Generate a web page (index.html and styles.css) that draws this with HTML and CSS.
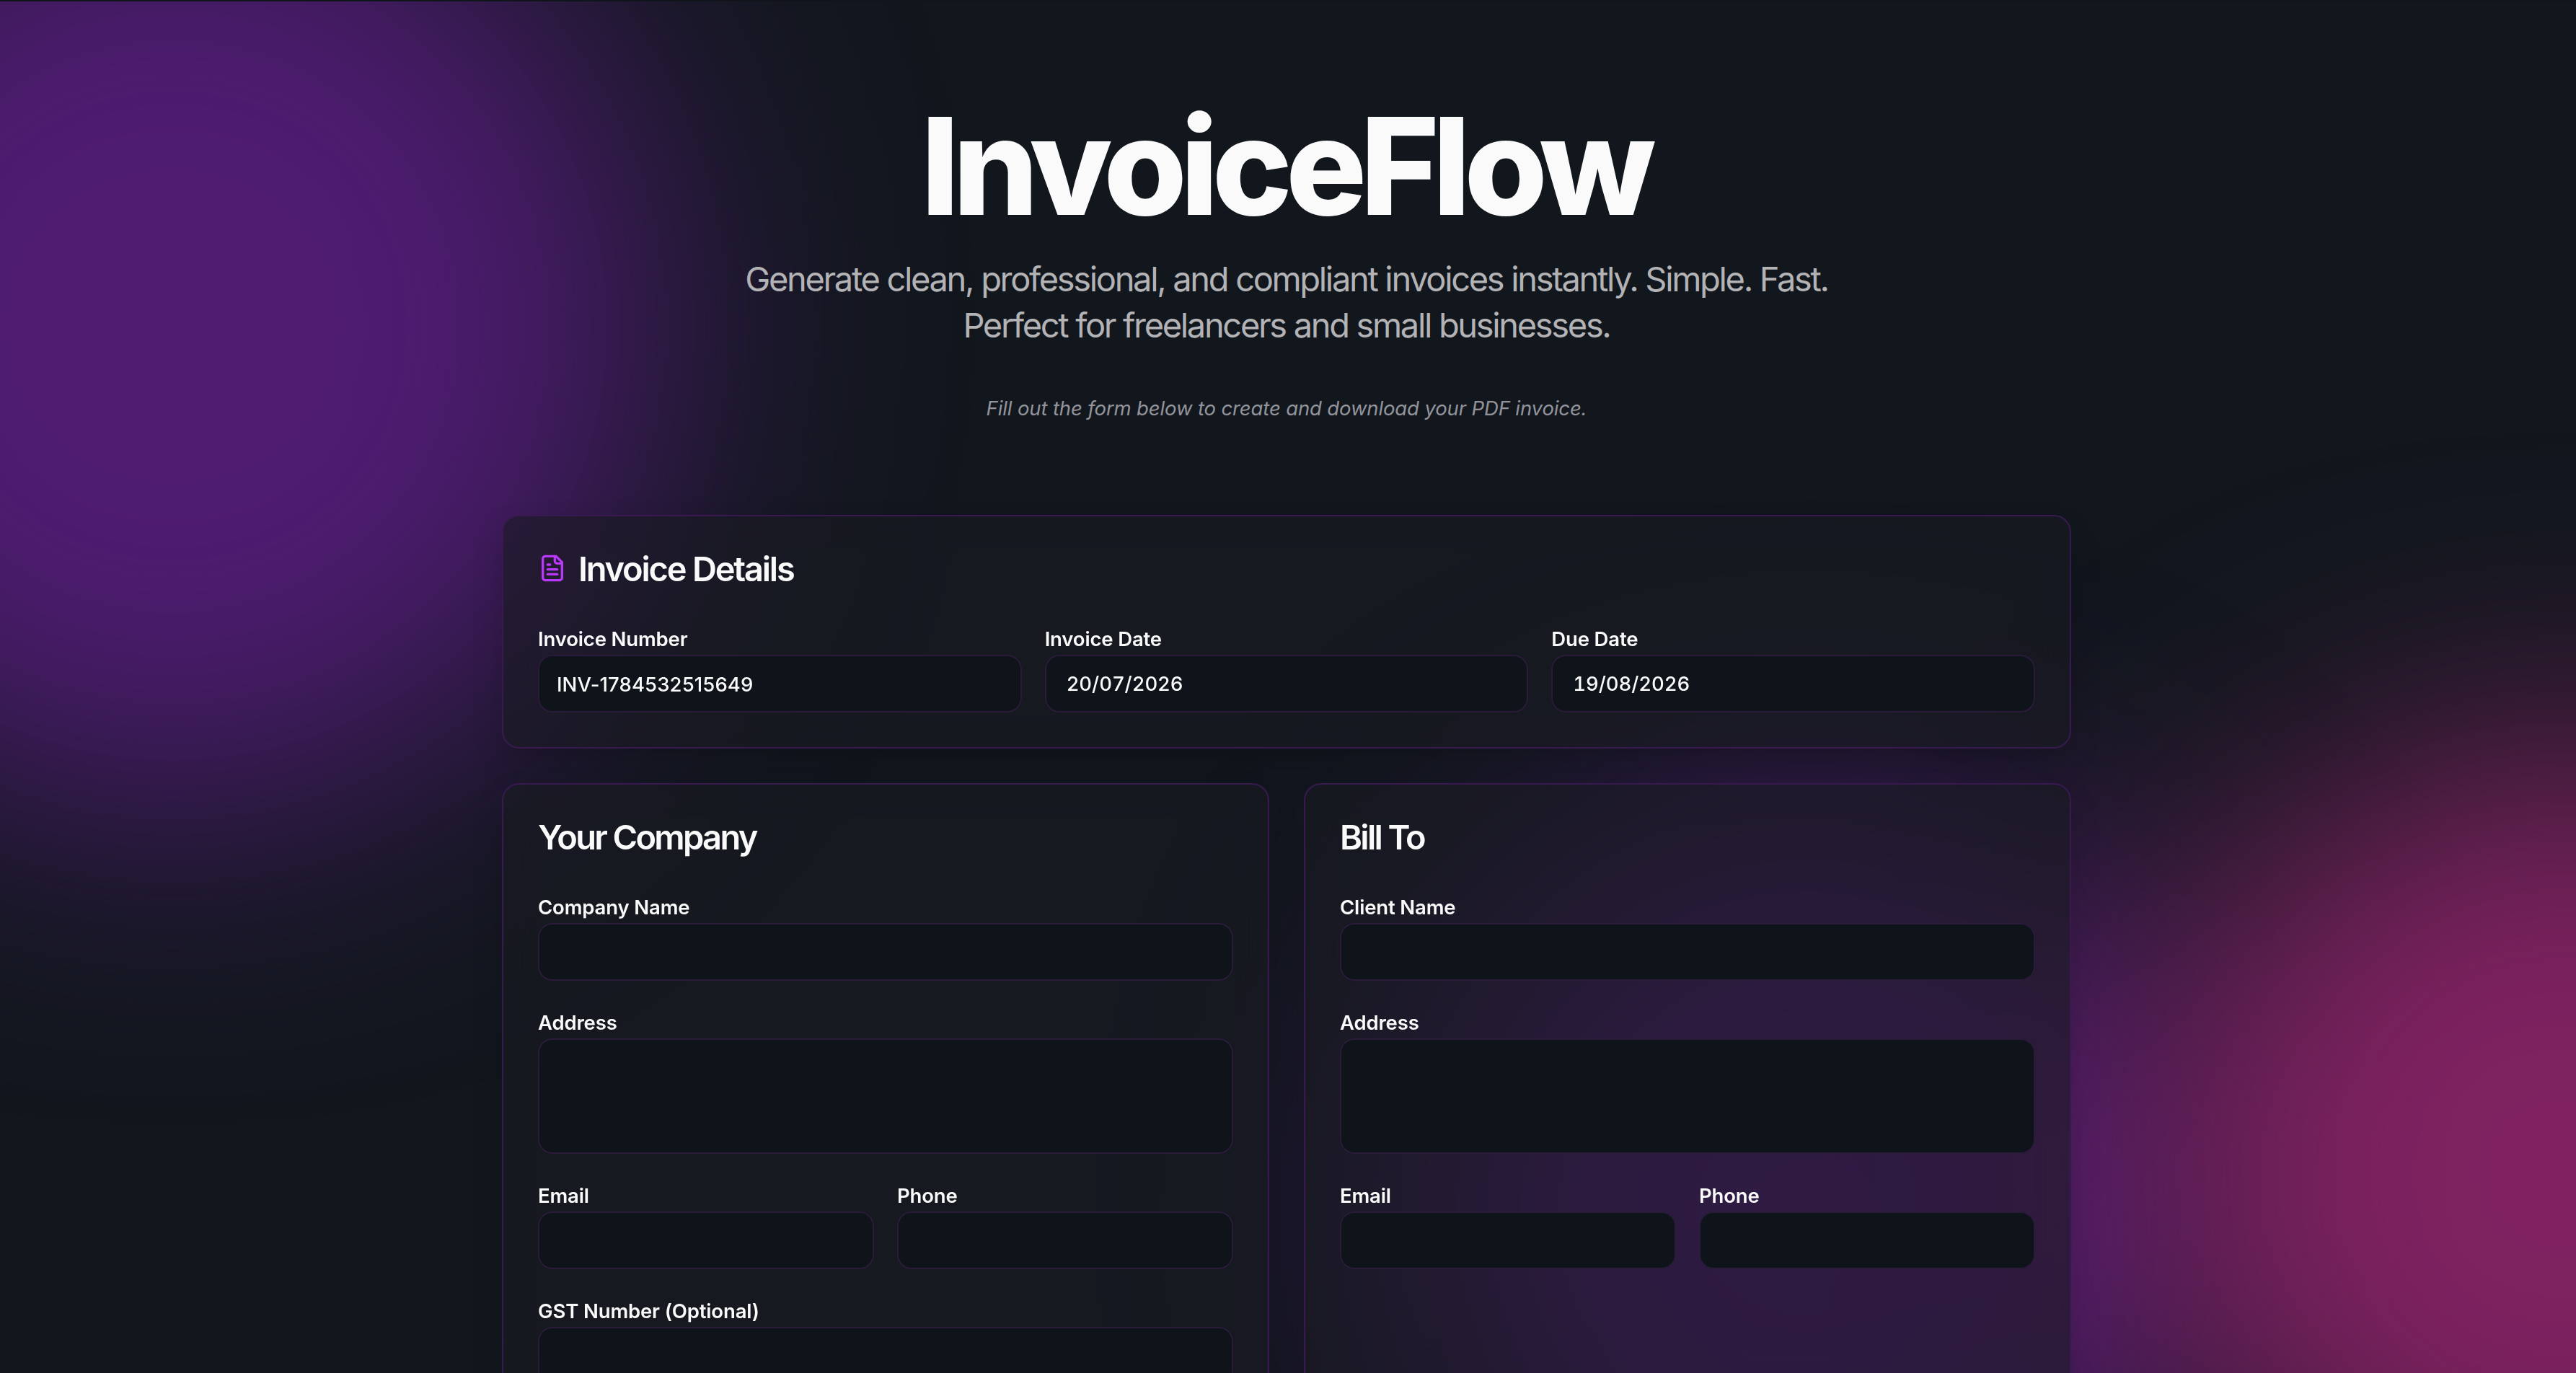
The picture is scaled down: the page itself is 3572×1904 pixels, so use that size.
FILE: index.html
```html
<!DOCTYPE html>
<html lang="en">
<head>
  <meta charset="UTF-8">
  <title>InvoiceFlow</title>
  <link rel="stylesheet" href="styles.css">
</head>
<body>

  <!-- Background glow -->
  <div class="glow">
    <div class="blob blob-left"></div>
    <div class="blob blob-center"></div>
    <div class="blob blob-right"></div>
  </div>

  <main class="page">
    <header class="hero">
      <h1>InvoiceFlow</h1>
      <p class="lead">Generate clean, professional, and compliant invoices instantly. Simple. Fast.<br>Perfect for freelancers and small businesses.</p>
      <p class="hint">Fill out the form below to create and download your PDF invoice.</p>
    </header>

    <form class="form">
      <section class="card">
        <h2 class="with-icon">
          <svg class="icon" viewBox="0 0 24 24" fill="none" stroke="currentColor" stroke-width="2" stroke-linecap="round" stroke-linejoin="round">
            <path d="M15 2H6a2 2 0 0 0-2 2v16a2 2 0 0 0 2 2h12a2 2 0 0 0 2-2V7Z"/>
            <path d="M14 2v4a2 2 0 0 0 2 2h4"/>
            <path d="M10 9H8"/>
            <path d="M16 13H8"/>
            <path d="M16 17H8"/>
          </svg>
          <span>Invoice Details</span>
        </h2>
        <div class="row three">
          <div class="field">
            <label for="number">Invoice Number</label>
            <input type="text" id="number" value="INV-1784532515649">
          </div>
          <div class="field">
            <label for="date">Invoice Date</label>
            <input type="text" class="date" id="date" value="20/07/2026">
          </div>
          <div class="field">
            <label for="due">Due Date</label>
            <input type="text" class="date" id="due" value="19/08/2026">
          </div>
        </div>
      </section>

      <div class="parties">
        <section class="card">
          <h2>Your Company</h2>
          <div class="field">
            <label for="company">Company Name</label>
            <input type="text" id="company">
          </div>
          <div class="field">
            <label for="companyAddress">Address</label>
            <textarea id="companyAddress"></textarea>
          </div>
          <div class="row two">
            <div class="field">
              <label for="companyEmail">Email</label>
              <input type="text" id="companyEmail">
            </div>
            <div class="field">
              <label for="companyPhone">Phone</label>
              <input type="text" id="companyPhone">
            </div>
          </div>
          <div class="field">
            <label for="gst">GST Number (Optional)</label>
            <input type="text" id="gst">
          </div>
        </section>

        <section class="card">
          <h2>Bill To</h2>
          <div class="field">
            <label for="client">Client Name</label>
            <input type="text" id="client">
          </div>
          <div class="field">
            <label for="clientAddress">Address</label>
            <textarea id="clientAddress"></textarea>
          </div>
          <div class="row two">
            <div class="field">
              <label for="clientEmail">Email</label>
              <input type="text" id="clientEmail">
            </div>
            <div class="field">
              <label for="clientPhone">Phone</label>
              <input type="text" id="clientPhone">
            </div>
          </div>
        </section>
      </div>
    </form>
  </main>

</body>
</html>
```
FILE: styles.css
```css
* {
  margin: 0;
  padding: 0;
  box-sizing: border-box;
}

body {
  height: 1904px;
  overflow: hidden;
  background: #12171e;
  border-top: 2px solid #10151c;
  color: #fafafa;
  font-family: Inter, "Liberation Sans", sans-serif;
}

/* blurred circles behind the page */
.glow {
  position: absolute;
  top: 2px;
  left: 0;
  width: 100%;
  height: 1902px;
  overflow: hidden;
}

.blob {
  position: absolute;
  border-radius: 50%;
  filter: blur(190px);
}

.blob-left {
  left: -430px;
  top: -220px;
  width: 1340px;
  height: 1340px;
  background: #4f1c72;
}

.blob-center {
  left: 1960px;
  top: 1130px;
  width: 1100px;
  height: 1100px;
  background: #501c74;
}

.blob-right {
  left: 2965px;
  top: 1035px;
  width: 1180px;
  height: 1180px;
  background: #802261;
}

.page {
  position: relative;
  width: 2176px;
  margin-left: 696px;
}

.hero {
  padding-top: 132px;
  height: 712px;
  text-align: center;
}

h1 {
  margin-left: -4px;
  font-size: 187px;
  line-height: 192px;
  font-weight: 800;
  letter-spacing: -9.1px;
}

.lead {
  margin-top: 29px;
  font-size: 47px;
  line-height: 64px;
  font-weight: 400;
  letter-spacing: -2.33px;
  color: #b3b3b6;
}

.hint {
  margin-top: 63px;
  font-size: 27.5px;
  line-height: 40px;
  font-style: italic;
  letter-spacing: -0.135px;
  color: #93949b;
}

.card {
  padding: 48px;
  border: 2px solid #381a50;
  border-radius: 24px;
  background: rgba(25, 26, 34, 0.6);
  backdrop-filter: blur(24px);
  box-shadow: 0 20px 50px -12px rgba(0, 0, 0, 0.25);
}

h2 {
  display: flex;
  align-items: center;
  height: 48px;
  margin-bottom: 58px;
  font-size: 47px;
  font-weight: 600;
  letter-spacing: -2.67px;
}

.with-icon {
  gap: 16px;
  letter-spacing: -2.2px;
}

.icon {
  width: 40px;
  height: 40px;
}

.icon {
  color: #b83af8;
}

.row {
  display: grid;
  gap: 32px;
}

.three {
  grid-template-columns: repeat(3, 1fr);
}

.two {
  grid-template-columns: repeat(2, 1fr);
}

.card > .field,
.card > .row {
  margin-bottom: 42px;
}

.card > :last-child {
  margin-bottom: 0;
}

label {
  display: block;
  height: 38px;
  font-size: 27.5px;
  line-height: 32px;
  font-weight: 600;
  letter-spacing: -0.15px;
}

input,
textarea {
  display: block;
  width: 100%;
  height: 80px;
  padding: 1px 24px 0;
  border: 2px solid #291b39;
  border-radius: 20px;
  background: #0f141b;
  color: #fafafa;
  font-family: inherit;
  font-size: 27.5px;
  font-weight: 500;
  letter-spacing: 0.12px;
  outline: none;
  resize: none;
}

textarea {
  height: 160px;
}

.date {
  padding: 0 28px;
  font-feature-settings: "tnum";
  letter-spacing: -0.1px;
}

.parties {
  display: grid;
  grid-template-columns: 1fr 1fr;
  gap: 48px;
  height: 900px;
  margin-top: 48px;
}
```
